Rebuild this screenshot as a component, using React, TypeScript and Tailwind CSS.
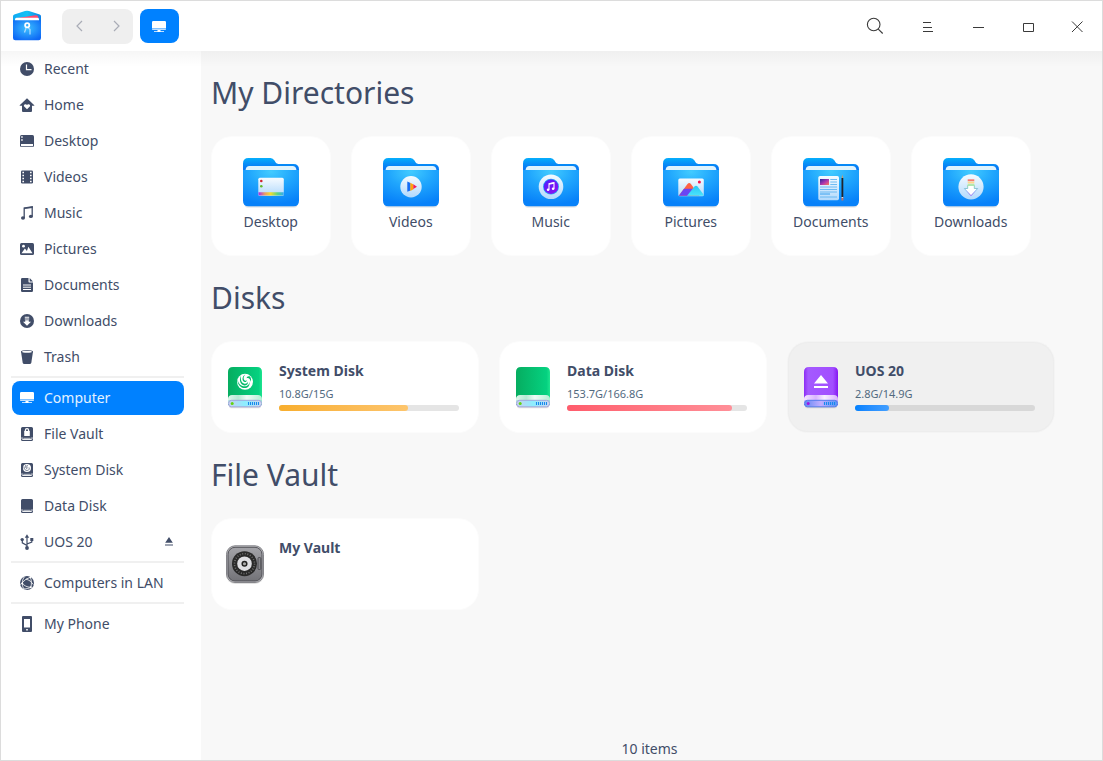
import React from "react";

type SvgKids = { children: React.ReactNode };

/* ---------- sidebar glyphs (16x16, currentColor) ---------- */

function Glyph({ children }: SvgKids) {
  return (
    <svg width="16" height="16" viewBox="0 0 16 16" fill="currentColor" className="shrink-0">
      {children}
    </svg>
  );
}

const diskShape =
  "M3.5 1h9A1.5 1.5 0 0 1 14 2.500v11A1.500 1.500 0 0 1 12.500 15h-9A1.500 1.500 0 0 1 2 13.500v-11A1.500 1.500 0 0 1 3.500 1z";

function DiskBase() {
  return (
    <>
      <path d={diskShape} />
      <path d="M3 11.300v1.200q0 1 1 1h8q1 0 1-1v-1.200" fill="none" stroke="#fff" strokeWidth=".9" />
      <path d="M4.300 12.300h7.400" stroke="#fff" strokeWidth=".7" />
    </>
  );
}

function MonitorShape() {
  return (
    <>
      <path d="M2.200 2h11.600A1.200 1.200 0 0 1 15 3.200V9.500H1V3.200A1.200 1.200 0 0 1 2.200 2z" />
      <path d="M1 10.200h14a1 1 0 0 1-1 .9H2a1 1 0 0 1-1-.9zM6.500 11h3v1.200h-3zM3 12.200h10v.9H3z" />
    </>
  );
}

const glyphs: Record<string, React.ReactNode> = {
  recent: (
    <>
      <circle cx="8" cy="8" r="7" />
      <path d="M7.500 3.500v5.200h5" fill="none" stroke="#fff" strokeWidth="1.200" />
    </>
  ),
  home: (
    <>
      <path d="M8 1.200 15.300 8.300a.3.300 0 0 1-.2.500H13v5.200a1 1 0 0 1-1 1H4a1 1 0 0 1-1-1V8.800H.9a.3.300 0 0 1-.2-.5z" />
      <path d="M8 12.300 5.200 9.600c-.9-1 .1-2.700 1.500-2.400.6.100 1 .4 1.300.9.300-.5.700-.8 1.300-.9 1.400-.3 2.400 1.400 1.500 2.400z" fill="#fff" />
    </>
  ),
  desktop: (
    <>
      <rect x="1" y="2" width="14" height="12" rx="1.500" />
      <path d="M2.200 3.200h1.500v1.500H2.200zM2.200 6.200h1.500v1.500H2.200zM2 11h12v1.700q0 .5-.5.500h-11q-.5 0-.5-.5z" fill="#fff" />
    </>
  ),
  videos: (
    <>
      <rect x="2" y="1.500" width="12" height="13" rx="1.300" />
      <path d="M4.200 2.700v11M11.800 2.700v11" stroke="#fff" strokeWidth="1.600" strokeDasharray="1.600 1.400" />
    </>
  ),
  music: (
    <>
      <path d="M5.200 13V3l8-1.200v9.800" fill="none" stroke="currentColor" strokeWidth="1.300" />
      <ellipse cx="4" cy="13" rx="2" ry="1.700" />
      <ellipse cx="11.900" cy="11.400" rx="2" ry="1.700" />
      <path d="M5 2.800 13.800 1.500v1.600L5 4z" />
    </>
  ),
  pictures: (
    <>
      <rect x="1" y="2" width="14" height="12" rx="1.500" />
      <path d="M2.500 12.200 5.900 7.600l2 2.500 1.500-4.300 4.100 6.400z" fill="#fff" />
      <circle cx="4.500" cy="5.200" r="1.400" fill="#fff" />
    </>
  ),
  documents: (
    <>
      <path d="M3.300 1H9.500v3.700q0 .8.800.8H14v8.200q0 1.300-1.300 1.300H3.300Q2 15 2 13.700V2.300Q2 1 3.300 1z" />
      <path d="M10.700 1v3.500H14z" />
      <path d="M4 8h8M4 10.200h8M4 12.500h8" stroke="#fff" strokeWidth="1" />
    </>
  ),
  downloads: (
    <>
      <circle cx="8" cy="8" r="7" />
      <path d="M5.800 3.700h4.400v1H5.800zM5.800 5.500h4.400v.9H5.800zM6.200 7.200h3.600v1.600H12L8 12.800 4 8.800h2.200z" fill="#fff" />
    </>
  ),
  trash: (
    <>
      <path d="M2 2.600 3.700 13.700Q4 15 5.300 15h5.400q1.300 0 1.600-1.300L14 2.600z" />
      <ellipse cx="8" cy="2.700" rx="6" ry="1.700" />
      <ellipse cx="8" cy="2.800" rx="4.900" ry="1" fill="#fff" />
    </>
  ),
  computer: <MonitorShape />,
  vault: (
    <>
      <DiskBase />
      <path d="M5.200 4.900h5.600V10H5.200z" fill="#fff" />
      <path d="M6.400 5.500V4.300a1.600 1.600 0 0 1 3.200 0v1.200" fill="none" stroke="#fff" strokeWidth="1.200" />
    </>
  ),
  system: (
    <>
      <DiskBase />
      <circle cx="8" cy="6" r="4" fill="#fff" />
      <path d="M5 4.500C5 7 6 8.500 8.300 8.500 10 8.500 10.600 6.800 10 5.500M6.800 3c-.6 2 .2 3.700 1.500 3.700M9 2.800C7.500 4 7.600 5.500 8.500 6" fill="none" stroke="currentColor" strokeWidth=".7" />
    </>
  ),
  data: <DiskBase />,
  usb: (
    <>
      <path d="M8 2v11.500M8 11.500 3.300 8.800V5.500M8 10l4.800-2V5.300" fill="none" stroke="currentColor" strokeWidth="1.200" />
      <path d="M8 .3 10.200 3.700H5.800z" />
      <circle cx="8" cy="14" r="1.900" />
      <circle cx="3.200" cy="5.600" r="1.700" />
      <rect x="11.300" y="4" width="3" height="3" />
    </>
  ),
  lan: (
    <>
      <circle cx="8" cy="8" r="7" />
      <path d="M5.700 1.500C3.900 3.500 3.300 5.500 3.500 8.500M1.200 9.500 7 4.200 11.600 2.200M7 4.200c3 .6 5.500 2.500 7.200 5.300M3.300 8.500c2 2.200 4.600 3.700 8.500 3.800M5 14c2.500-.1 5.300-.8 6.800-1.700C12.800 9.500 12.500 5 11.300 2M3.300 8.500C3.400 11 4 12.800 5 14" fill="none" stroke="#fff" strokeWidth=".8" />
      <circle cx="3.300" cy="8.500" r="1" fill="#fff" />
      <circle cx="11.800" cy="12.200" r="1" fill="#fff" />
      <circle cx="11.300" cy="2.300" r=".9" fill="#fff" />
    </>
  ),
  phone: (
    <>
      <rect x="3" y="0" width="10" height="16" rx="1" />
      <path d="M5 3h6v8.500H5zM7.200 13h1.600v1.600H7.200z" fill="#fff" />
    </>
  ),
};

type Entry = { id: string; label: string; active?: boolean; eject?: boolean };

const groups: Entry[][] = [
  [
    { id: "recent", label: "Recent" },
    { id: "home", label: "Home" },
    { id: "desktop", label: "Desktop" },
    { id: "videos", label: "Videos" },
    { id: "music", label: "Music" },
    { id: "pictures", label: "Pictures" },
    { id: "documents", label: "Documents" },
    { id: "downloads", label: "Downloads" },
    { id: "trash", label: "Trash" },
  ],
  [
    { id: "computer", label: "Computer", active: true },
    { id: "vault", label: "File Vault" },
    { id: "system", label: "System Disk" },
    { id: "data", label: "Data Disk" },
    { id: "usb", label: "UOS 20", eject: true },
  ],
  [{ id: "lan", label: "Computers in LAN" }],
  [{ id: "phone", label: "My Phone" }],
];

function SidebarItem({ item }: { item: Entry }) {
  return (
    <div
      className={
        item.active
          ? "mb-[2px] ml-[11px] flex h-[34px] w-[172px] items-center rounded-lg bg-[#0081ff] pl-[7px] text-[#e4f2ff]"
          : "mb-[2px] ml-[11px] flex h-[34px] w-[172px] items-center rounded-lg pl-[7px] text-[#414d68]"
      }
    >
      <span className={item.active ? "flex text-white" : "flex"}>
        <Glyph>{glyphs[item.id]}</Glyph>
      </span>
      <span className="ml-[9px] flex-1 leading-[20px] whitespace-nowrap">{item.label}</span>
      {item.eject && (
        <svg width="8" height="9" viewBox="0 0 8 9" fill="currentColor" className="mr-[11px] mb-[1px]">
          <path d="M4 0 7.800 5.800H.2zM0 7.500h8v1H0z" />
        </svg>
      )}
    </div>
  );
}

/* ---------- title bar ---------- */

function AppLogo() {
  return (
    <svg width="30" height="32" viewBox="0 0 30 32">
      <defs>
        <radialGradient id="lg" cx=".5" cy=".4" r=".65">
          <stop offset="0" stopColor="#3cc0ff" />
          <stop offset="1" stopColor="#0d68f5" />
        </radialGradient>
        <linearGradient id="lt" x1="0" x2="1">
          <stop offset="0" stopColor="#10a9f2" />
          <stop offset=".5" stopColor="#14c2f5" />
          <stop offset="1" stopColor="#0a7fe8" />
        </linearGradient>
      </defs>
      <path d="M1 12V6.300Q1 5 2.300 4.400L13 1Q15 .4 17 1L27.700 4.400Q29 5 29 6.300V12H1z" fill="url(#lt)" />
      <path d="M4 8.300 23.500 5.200Q26 5 26.500 7.500v2H4z" fill="#ff4b6e" />
      <path d="M3 9.300Q3 7.800 4.500 7.800H25.500q1.500 0 1.500 1.500V12H3z" fill="#fff" />
      <path d="M1 10.200h28V28Q29 30.300 26.700 30.300H3.300Q1 30.300 1 28z" fill="url(#lg)" />
      <path d="M14 18 12.500 22.500M16 17.500 18 19.500V24.500" fill="none" stroke="#a9d9ff" strokeWidth="1.300" />
      <circle cx="15.200" cy="15.200" r="2.100" fill="none" stroke="#fff" strokeWidth="1.800" />
    </svg>
  );
}

function TitleBar() {
  return (
    <header className="flex h-[50px] shrink-0 items-center bg-white">
      <div className="ml-[11px] flex w-[30px]">
        <AppLogo />
      </div>
      <div className="ml-[20px] flex h-[35px] w-[71px] items-center justify-between rounded-[8px] bg-[#efefef] pr-[13px] pl-[14px]">
        <svg width="7" height="12" viewBox="0 0 7 12" fill="none" stroke="#a9acb6" strokeWidth="1.200">
          <path d="M6 1 1 6l5 5" />
        </svg>
        <svg width="7" height="12" viewBox="0 0 7 12" fill="none" stroke="#a9acb6" strokeWidth="1.200">
          <path d="m1 1 5 5-5 5" />
        </svg>
      </div>
      <div className="ml-[7px] flex h-[34px] w-[39px] items-center justify-center rounded-[8px] bg-[#0081ff] pr-[1px] pb-[1px] text-white">
        <svg width="16" height="16" viewBox="0 0 16 16" fill="currentColor">
          <g transform="translate(0 1)">
            <MonitorShape />
          </g>
        </svg>
      </div>
      <svg width="18" height="18" viewBox="0 0 18 18" fill="none" stroke="#3a3a3a" strokeWidth="1.100" className="ml-auto">
        <circle cx="7.700" cy="7.500" r="6.300" />
        <path d="m12.300 12.100 4.400 4.400" />
      </svg>
      <svg width="12" height="12" viewBox="0 0 12 12" fill="none" stroke="#3a3a3a" className="mt-[2px] ml-[38px]">
        <path d="M1 1.500h8M1 6.500h9M1 10.500h10" />
      </svg>
      <svg width="12" height="12" viewBox="0 0 12 12" fill="none" stroke="#3a3a3a" className="mt-[2px] ml-[38px]">
        <path d="M1 6.500h11" />
      </svg>
      <svg width="12" height="12" viewBox="0 0 12 12" fill="none" stroke="#3a3a3a" className="mt-[2px] ml-[38px]">
        <path d="M1.500 2.500h10v8h-10z" />
      </svg>
      <svg width="12" height="12" viewBox="0 0 12 12" fill="none" stroke="#3a3a3a" className="mt-[1px] mr-[19px] ml-[37px]">
        <path d="m1 .5 10.500 10.500M11.500.5 1 11" />
      </svg>
    </header>
  );
}

/* ---------- directory folders ---------- */

const badges: Record<string, React.ReactNode> = {
  Desktop: (
    <>
      <rect x="15.300" y="19.700" width="25.500" height="18.300" rx="1.500" fill="url(#pane)" />
      <circle cx="18.300" cy="23" r="1.300" fill="#d3202f" />
      <circle cx="18.300" cy="28.200" r="1.300" fill="#62b82c" />
      <path d="M15.500 34.300h25.200v2.200q0 1-1 1h-23.200q-1 0-1-1z" fill="url(#rainbow)" />
    </>
  ),
  Videos: (
    <>
      <circle cx="28" cy="28.700" r="10.700" fill="url(#pane)" />
      <path d="M24.300 23.600 27.500 25v7.500l-3.200 1.300z" fill="#176df5" />
      <path d="M27.300 24.800 30.500 26.500v4.700l-3.200 1.700z" fill="#ffa20d" />
      <path d="M30.300 26.300 34 28.700l-3.700 2.400z" fill="#f51c5c" />
    </>
  ),
  Music: (
    <>
      <circle cx="28" cy="28.700" r="12.300" fill="url(#pane)" />
      <circle cx="28" cy="28.700" r="7.900" fill="#23a6f8" />
      <circle cx="28" cy="28.700" r="7.200" fill="url(#violet)" />
      <path d="M26 31.700v-6l5-1v6" fill="none" stroke="#fff" strokeWidth="1.100" />
      <circle cx="25.100" cy="31.800" r="1.300" fill="#fff" />
      <circle cx="30.100" cy="30.800" r="1.300" fill="#fff" />
      <path d="M26 25.200 31 24.200v1.500L26 26.700z" fill="#fff" />
    </>
  ),
  Pictures: (
    <>
      <rect x="15.300" y="20.500" width="25.500" height="17.800" rx="1.500" fill="url(#pane)" />
      <circle cx="36.400" cy="23.900" r="1.500" fill="#f5124f" />
      <path d="M15.800 37.800 24.500 26q1.700-1.800 3.400 0l8.600 11.800z" fill="#ff6243" />
      <path d="M15.800 37.800 21 30.700h10l-5 7.100z" fill="#6a44f4" />
      <path d="M24 37.800 31.500 28.500q1.500-1.500 3 0l6 8v.5q0 .8-.8.800z" fill="url(#aqua)" />
    </>
  ),
  Documents: (
    <>
      <rect x="15.300" y="18" width="20.700" height="24.300" rx="1.700" fill="url(#pane)" />
      <rect x="17" y="21" width="9" height="6" fill="url(#photo)" />
      <path d="M27.300 21.500H34M27.300 24H34M27.300 26.500H34M17 29h17M17 31.500h17M17 34h17M17 39h17" stroke="#61b4f1" strokeWidth=".9" />
      <path d="M17 36h10" stroke="#279aed" strokeWidth=".9" />
      <path d="M38.500 20h1.800v20h-1.800z" fill="#20242c" />
      <path d="m38.500 20 .9-3.500.9 3.500z" fill="#c5986c" />
      <path d="M38.500 39.500h1.800v3h-1.800z" fill="#cb6d5e" />
      <path d="M38.500 39h1.800v.9h-1.800z" fill="#e7edf2" />
    </>
  ),
  Downloads: (
    <>
      <circle cx="28" cy="28.800" r="12.600" fill="url(#pane)" />
      <path d="M24.700 27.300h6.600v3.200h3.400L28 37.700l-6.700-7.200h3.400z" fill="#fff" stroke="url(#arrow)" strokeWidth=".9" strokeLinejoin="round" />
      <path d="M24.700 21.300h6.600v1.900h-6.600z" fill="#f57c73" />
      <path d="M24.700 23.600h6.600v1.900h-6.600z" fill="#ffd88b" />
      <path d="M24.700 25.900h6.600v1.700h-6.600z" fill="#b4e8ae" />
    </>
  ),
};

function SharedGradients() {
  return (
    <svg width="0" height="0" className="absolute">
      <defs>
        <linearGradient id="back" x2="0" y2="1">
          <stop offset="0" stopColor="#05aefc" />
          <stop offset=".4" stopColor="#0878f4" />
        </linearGradient>
        <radialGradient id="front" cx=".5" cy=".05" r=".9">
          <stop offset="0" stopColor="#42cbff" />
          <stop offset=".45" stopColor="#20a6fd" />
          <stop offset="1" stopColor="#0781f9" />
        </radialGradient>
        <linearGradient id="pane" x2="0" y2="1">
          <stop offset="0" stopColor="#f6fbff" />
          <stop offset="1" stopColor="#b1d9fc" />
        </linearGradient>
        <linearGradient id="rainbow">
          <stop offset="0" stopColor="#a32bea" />
          <stop offset=".25" stopColor="#e99b68" />
          <stop offset=".48" stopColor="#f1dd2b" />
          <stop offset=".75" stopColor="#5ad582" />
          <stop offset="1" stopColor="#33aaf5" />
        </linearGradient>
        <linearGradient id="violet" x2="1" y2="1">
          <stop offset="0" stopColor="#4c20ff" />
          <stop offset="1" stopColor="#9410ee" />
        </linearGradient>
        <linearGradient id="aqua" x2="0" y2="1">
          <stop offset="0" stopColor="#28c7f5" />
          <stop offset="1" stopColor="#4be4fb" />
        </linearGradient>
        <linearGradient id="photo" x2="1" y2="1">
          <stop offset="0" stopColor="#27259b" />
          <stop offset=".55" stopColor="#b237ad" />
          <stop offset="1" stopColor="#ff7a55" />
        </linearGradient>
        <linearGradient id="arrow" x2="0" y2="1">
          <stop offset="0" stopColor="#86d99b" />
          <stop offset=".5" stopColor="#7cb2f0" />
          <stop offset="1" stopColor="#8d55ed" />
        </linearGradient>
        <linearGradient id="green">
          <stop offset="0" stopColor="#06ad60" />
          <stop offset=".9" stopColor="#05d180" />
          <stop offset="1" stopColor="#1ee48f" />
        </linearGradient>
        <linearGradient id="purple">
          <stop offset="0" stopColor="#8c2df4" />
          <stop offset=".12" stopColor="#a45aff" />
          <stop offset=".85" stopColor="#a24eff" />
          <stop offset="1" stopColor="#8518f2" />
        </linearGradient>
        <linearGradient id="greenLip">
          <stop offset="0" stopColor="#dff6eb" />
          <stop offset=".3" stopColor="#b6ead4" />
          <stop offset=".55" stopColor="#effbf6" />
          <stop offset="1" stopColor="#b3f0d5" />
        </linearGradient>
        <linearGradient id="purpleLip">
          <stop offset="0" stopColor="#f3e5ff" />
          <stop offset=".35" stopColor="#d9b4ff" />
          <stop offset=".6" stopColor="#f7eeff" />
          <stop offset="1" stopColor="#d9afff" />
        </linearGradient>
        <linearGradient id="greenBase">
          <stop offset="0" stopColor="#c9ceef" />
          <stop offset=".5" stopColor="#8deefe" />
          <stop offset="1" stopColor="#d1d6f1" />
        </linearGradient>
        <linearGradient id="purpleBase">
          <stop offset="0" stopColor="#6289f4" />
          <stop offset=".5" stopColor="#c3aeff" />
          <stop offset="1" stopColor="#5796f5" />
        </linearGradient>
        <linearGradient id="steel" x2="0" y2="1">
          <stop offset="0" stopColor="#a3a3a8" />
          <stop offset="1" stopColor="#737378" />
        </linearGradient>
      </defs>
    </svg>
  );
}

function FolderCard({ name }: { name: string }) {
  return (
    <div className="flex h-[118px] w-[118px] flex-col items-center rounded-[20px] bg-white pt-[21px] ring-1 ring-white/60">
      <svg width="56" height="52" viewBox="0 0 56 52" className="shrink-0">
        <path d="M2 46h52v1.500q0 2-3.500 2h-45q-3.500 0-3.500-2z" fill="#31506d" opacity=".18" />
        <path d="M0 5.500Q0 0 5.500 0H27.500Q30 0 31.500 2.500L32.500 4.200Q33.500 6 35.500 6H50.500Q56 6 56 11.500V25H0z" fill="url(#back)" />
        <path d="M2.700 13V11.500Q3 8 6.500 8H49.500Q53 8 53.300 11.500V13z" fill="#dff3fd" />
        <path d="M0 12H56V42.800Q56 48.300 50.500 48.300H5.500Q0 48.300 0 42.800z" fill="url(#front)" />
        {badges[name]}
      </svg>
      <span className="mt-[2px] pr-[0.5px] leading-[20px] text-[#414d68]">{name}</span>
    </div>
  );
}

/* ---------- disks ---------- */

function DriveIcon({ kind }: { kind: "system" | "data" | "removable" }) {
  const removable = kind === "removable";
  return (
    <svg width="34" height="44" viewBox="0 0 34 44" className="shrink-0">
      <path d="M1 37h32v2q0 2.300-3 2.300H4q-3 0-3-2.300z" fill="#555" opacity=".2" />
      <path d="M0 5Q0 0 5 0H29Q34 0 34 5V38H0z" fill={removable ? "url(#purple)" : "url(#green)"} />
      <path d="M0 31.500Q.5 28 4 28H30Q33.500 28 34 31.500V37H0z" fill={removable ? "url(#purpleLip)" : "url(#greenLip)"} />
      <path d="M0 33h34v3H0z" fill={removable ? "#7b75ef" : "#57c4c9"} opacity=".25" />
      <rect x=".5" y="33.300" width="33" height="6.500" rx="3" fill={removable ? "url(#purpleBase)" : "url(#greenBase)"} stroke={removable ? "#567ced" : "#a0a8dc"} />
      <circle cx="4.200" cy="36.500" r="1.500" fill={removable ? "#a116e2" : "#65d40e"} />
      <path d="M20.500 35v3M22.500 35v3M24.500 35v3M26.500 35v3M28.500 35v3M30.500 35v3" stroke="#168bed" strokeWidth="1.100" />
      {kind === "system" && (
        <>
          <circle cx="17" cy="14.800" r="8" fill="#fff" />
          <g fill="#07bb6b">
            <path d="M9.600 12.500c.8 4.500 3.500 7 7.400 6.800 3-.2 4.600-2.400 4.200-4.800 1.200 3.500-.8 6.500-4.400 6.600-4.400 0-7.600-3.900-7.200-8.600z" />
            <path d="M13 8.500c-.7 4.200.5 7.500 3.500 8.200 1.800.4 3.200-.7 3.100-2.200.9 2.300-.7 4.200-3.200 3.900-4-.5-5.700-5.500-3.400-9.900z" />
            <path d="M17.500 7.200c-2.200 2-2.500 5-.8 6.300.8.600 1.800.2 1.900-.5.400 1.300-.6 2.300-2 2-2.800-.8-3-5.500.9-7.800z" />
            <path d="M22 9.500c-2-.6-3.300.2-3.400 1.800 2-.8 3.600.6 4.200 3.500.5-2 .3-3.900-.8-5.300z" />
          </g>
        </>
      )}
      {removable && <path d="M17 8 24 16.500H10zM10 19h14v2H10z" fill="#fff" />}
    </svg>
  );
}

type Disk = {
  name: string;
  usage: string;
  kind: "system" | "data" | "removable";
  width: number;
  fill: string;
};

const disks: Disk[] = [
  { name: "System Disk", usage: "10.8G/15G", kind: "system", width: 129, fill: "from-[#f8ae2c] to-[#fdc56c]" },
  { name: "Data Disk", usage: "153.7G/166.8G", kind: "data", width: 165, fill: "from-[#ff5c6c] to-[#ff8f98]" },
  { name: "UOS 20", usage: "2.8G/14.9G", kind: "removable", width: 34, fill: "from-[#0081ff] to-[#429fff]" },
];

function DiskCard({ disk }: { disk: Disk }) {
  const hovered = disk.kind === "removable";
  return (
    <div
      className={
        hovered
          ? "flex h-[90px] w-[266px] rounded-[20px] bg-[#f0f0f0] pl-[16px] inset-ring inset-ring-[#ededed] ring-1 ring-[#f4f4f4]"
          : "flex h-[90px] w-[266px] rounded-[20px] bg-white pl-[16px] ring-1 ring-white/60"
      }
    >
      <div className="pt-[25px]">
        <DriveIcon kind={disk.kind} />
      </div>
      <div className="ml-[17px] flex w-[180px] flex-col pt-[19px]">
        <span className="leading-[20px] font-bold text-[#414d68]">{disk.name}</span>
        <span className="mt-[5px] text-[11px] leading-[16px] text-[#526a7f]">{disk.usage}</span>
        <div className={hovered ? "mt-[3px] h-[6px] rounded-[3px] bg-[#d8d8d8]" : "mt-[3px] h-[6px] rounded-[3px] bg-[#e5e5e5]"}>
          <div className={"h-full rounded-[3px] bg-linear-to-r " + disk.fill} style={{ width: disk.width }} />
        </div>
      </div>
    </div>
  );
}

function SafeIcon() {
  return (
    <svg width="40" height="40" viewBox="0 0 40 40" className="shrink-0">
      <rect x="1" y="1.500" width="38" height="37.500" rx="9" fill="#999" opacity=".3" />
      <rect x="1.500" y=".800" width="37" height="36.700" rx="8.500" fill="#bdbdc1" stroke="#85858a" />
      <rect x="3" y="2.300" width="34" height="33.700" rx="7" fill="url(#steel)" stroke="#4b4b50" strokeWidth=".9" />
      <circle cx="19.500" cy="18.700" r="12.500" fill="#292929" />
      <circle cx="19.500" cy="18.700" r="10" fill="none" stroke="#777" strokeWidth="1.600" strokeDasharray=".9 1.720" />
      <circle cx="19.500" cy="18.700" r="7.300" fill="#dedee2" />
      <circle cx="19.500" cy="18.700" r="2.300" fill="#aaa" stroke="#222" strokeWidth="1.500" />
      <rect x="33" y="12.500" width="2.800" height="12" rx="1" fill="#88888d" stroke="#3d3d42" strokeWidth=".8" />
    </svg>
  );
}

function Heading({ children }: SvgKids) {
  return <h2 className="-ml-px text-[30px] leading-[42px] whitespace-nowrap text-[#414d68]">{children}</h2>;
}

export default function App() {
  return (
    <div className="flex h-[761px] w-[1103px] flex-col overflow-hidden border border-[#dcdcdc] bg-white font-['Noto_Sans',sans-serif] text-[14px]">
      <SharedGradients />
      <TitleBar />
      <div className="relative flex min-h-0 flex-1">
        <div className="pointer-events-none absolute inset-x-0 top-0 h-[16px] bg-linear-to-b from-black/[0.035] to-transparent" />
        <nav className="w-[200px] shrink-0 bg-white pt-[1px]">
          {groups.map((group, i) => (
            <div key={i}>
              {i > 0 && (
                <div className="flex h-[5px] pl-[10px]">
                  <div className="h-[2px] w-[173px] bg-[#f0f0f0]" />
                </div>
              )}
              {group.map((item) => (
                <SidebarItem key={item.id} item={item} />
              ))}
            </div>
          ))}
        </nav>
        <main className="flex flex-1 flex-col bg-[#f8f8f8] pt-[21px] pl-[11px]">
          <Heading>My Directories</Heading>
          <div className="mt-[23px] flex gap-[22px]">
            {Object.keys(badges).map((name) => (
              <FolderCard key={name} name={name} />
            ))}
          </div>
          <div className="mt-[22px]">
            <Heading>Disks</Heading>
          </div>
          <div className="mt-[23px] flex gap-[22px]">
            {disks.map((disk) => (
              <DiskCard key={disk.name} disk={disk} />
            ))}
          </div>
          <div className="mt-[22px]">
            <Heading>File Vault</Heading>
          </div>
          <div className="mt-[23px] flex h-[90px] w-[266px] rounded-[20px] bg-white pt-[19px] pl-[13px] ring-1 ring-white/60">
            <div className="pt-[7px]">
              <SafeIcon />
            </div>
            <span className="ml-[14px] leading-[20px] font-bold text-[#414d68]">My Vault</span>
          </div>
          <footer className="mt-auto mr-[15px] pb-[1px] text-center leading-[20px] text-[#414d68]">10 items</footer>
        </main>
      </div>
    </div>
  );
}
